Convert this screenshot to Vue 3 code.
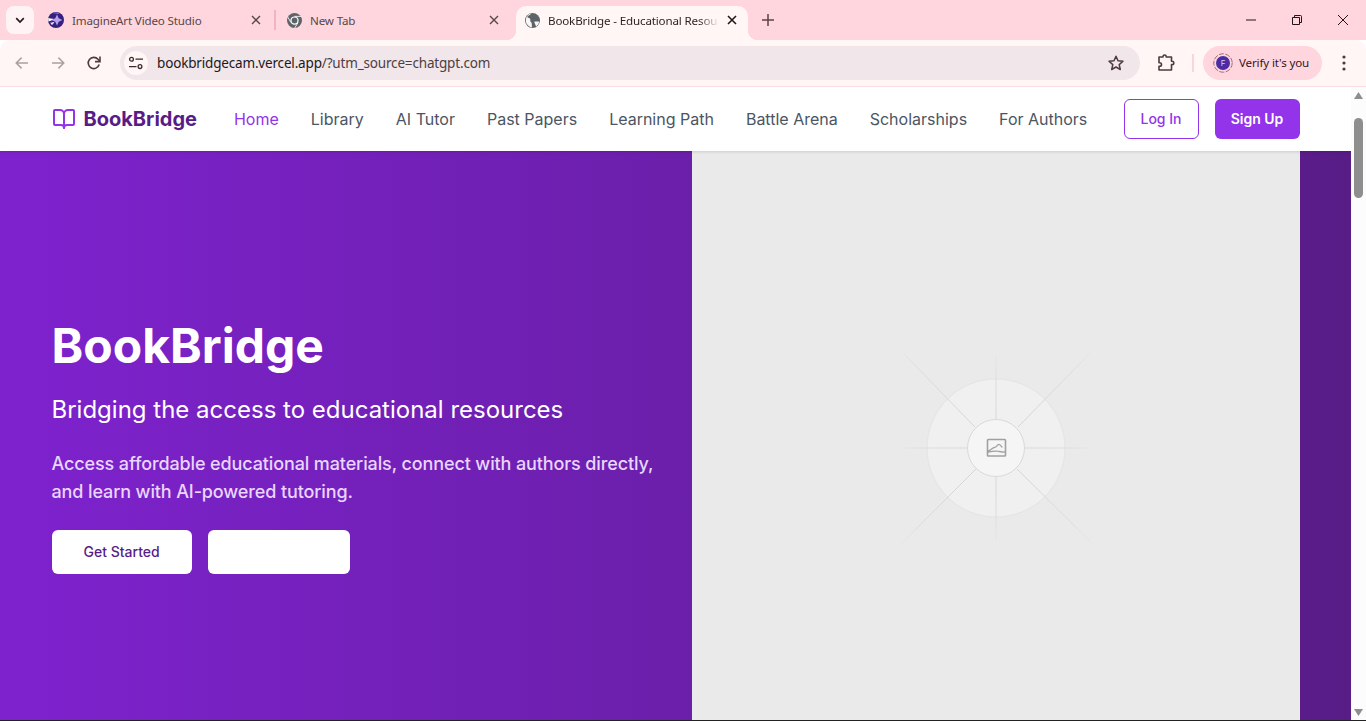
<script setup>
const links = ['Home', 'Library', 'AI Tutor', 'Past Papers', 'Learning Path', 'Battle Arena', 'Scholarships', 'For Authors']
const axisRays = [
  [996, 355, 996, 419], [996, 477, 996, 541],
  [903, 448, 967, 448], [1025, 448, 1089, 448]
]
const diagRays = [
  [903, 353, 975, 427], [1090, 353, 1018, 427],
  [902, 543, 976, 469], [1092, 543, 1017, 469]
]
</script>

<template>
  <div class="window">
    <div class="tabstrip">
      <button class="tabsearch" aria-label="Search tabs">
        <svg width="12" height="12" viewBox="0 0 12 12"><path d="M2.200 4.200 6 8l3.800-3.800" fill="none" stroke="#2a1a1e" stroke-width="1.700"/></svg>
      </button>
      <div class="tab tab-one">
        <svg class="fav" width="16" height="16" viewBox="0 0 16 16">
          <circle cx="8" cy="8" r="8" fill="#35207c"/>
          <path d="M9 2.400 10.700 6.300 14.400 8 10.700 9.700 9 13.600 7.300 9.700 3.600 8 7.300 6.300z" fill="#b7a0f0"/>
          <path d="M.2 6C2 6.600 3.600 7 5.600 6.800 4.400 8.400 2.600 9 .4 9.400z" fill="#fff"/>
          <path d="M2.200 10.600C3.600 10.800 5 10.400 6.400 9.800 5.800 11.400 5 12.400 3.800 13z" fill="#e9e2ff"/>
          <path d="M5 1C7 .3 9.800.5 11.800 2 9.400 1.800 7 2 5 1z" fill="#7d62d8"/>
        </svg>
        <span class="title">ImagineArt Video Studio</span>
        <svg class="close" width="10" height="10" viewBox="0 0 10 10"><path d="M1 1l8 8M9 1l-8 8" stroke="#55474b" stroke-width="1.400"/></svg>
      </div>
      <i class="tabsep"></i>
      <div class="tab tab-two">
        <svg class="fav" width="15" height="15" viewBox="0 0 16 16">
          <circle cx="8" cy="8" r="8" fill="#5f6368"/>
          <circle cx="8" cy="8" r="4.400" fill="#fff"/>
          <circle cx="8" cy="8" r="3.100" fill="#5f6368"/>
          <path d="M8 3.600h7M4.200 10.200.9 4.400M11.800 10.200 8.200 16" stroke="#fff" stroke-width=".9"/>
        </svg>
        <span class="title">New Tab</span>
        <svg class="close" width="10" height="10" viewBox="0 0 10 10"><path d="M1 1l8 8M9 1l-8 8" stroke="#55474b" stroke-width="1.400"/></svg>
      </div>
      <div class="tab active">
        <svg class="fav" width="15" height="15" viewBox="0 0 16 16">
          <circle cx="8" cy="8" r="8" fill="#5f6368"/>
          <path d="M7 .6C5.600 2 4.400 2.400 3 3.200 2 4 2.800 5 4 5.200 5.600 5.400 6 6.600 5.600 8 5.400 9 6.600 9.600 7 10.600 7.400 11.800 7.200 13 7.400 15.400 5 15 2.800 13.400 1.400 11 .4 8 .8 4.600 3 2.400 4.200 1.200 5.600.7 7 .6z" fill="#fff" opacity=".95"/>
          <path d="M9.800 9.400c1.400-.4 3.400-.4 5.400 0-.4 2-1.400 3.600-3.400 5-.4-1.400-1.400-3-2-5z" fill="#fff" opacity=".95"/>
        </svg>
        <span class="title fade">BookBridge - Educational Resou</span>
        <svg class="close" width="10" height="10" viewBox="0 0 10 10"><path d="M1 1l8 8M9 1l-8 8" stroke="#22181b" stroke-width="1.600"/></svg>
      </div>
      <button class="newtab" aria-label="New tab">
        <svg width="12" height="12" viewBox="0 0 12 12"><path d="M6 0v12M0 6h12" stroke="#5b4349" stroke-width="1.500"/></svg>
      </button>
      <div class="winctl">
        <svg width="46" height="16" viewBox="0 0 46 16"><path d="M18 8h10" stroke="#1f1719" stroke-width="1"/></svg>
        <svg width="46" height="16" viewBox="0 0 46 16"><path d="M18.500 5.500h7v7h-7zM20.500 5.500V3.500h6a1 1 0 0 1 1 1v6h-2" fill="none" stroke="#1f1719" stroke-width="1"/></svg>
        <svg width="46" height="16" viewBox="0 0 46 16"><path d="M18 3l10 10M28 3 18 13" stroke="#1f1719" stroke-width="1"/></svg>
      </div>
    </div>

    <div class="toolbar">
      <svg class="tb" width="16" height="16" viewBox="0 0 16 16"><path d="M14 8H2.500M7.600 2.600 2.200 8l5.400 5.400" fill="none" stroke="#ad9fa3" stroke-width="1.500"/></svg>
      <svg class="tb" width="16" height="16" viewBox="0 0 16 16"><path d="M2 8h11.500M8.400 2.600 13.800 8l-5.400 5.400" fill="none" stroke="#ad9fa3" stroke-width="1.500"/></svg>
      <svg class="tb reload" width="16" height="16" viewBox="0 0 16 16"><path d="M13.200 9.600A5.600 5.600 0 1 1 12 4.200L13.600 6" fill="none" stroke="#4f3a40" stroke-width="1.600"/><path d="M14 1.600v5h-5" fill="none" stroke="#4f3a40" stroke-width="1.600"/></svg>
      <div class="omnibox">
        <span class="siteinfo">
          <svg width="16" height="14" viewBox="0 0 16 14"><circle cx="3.500" cy="3.200" r="1.900" fill="none" stroke="#3c2b30" stroke-width="1.300"/><path d="M7.500 3.200H15M1 10.600h7.500" stroke="#3c2b30" stroke-width="1.300"/><circle cx="12" cy="10.600" r="1.900" fill="none" stroke="#3c2b30" stroke-width="1.300"/></svg>
        </span>
        <span class="url"><span>bookbridgecam.vercel.app</span><span class="dim">/?utm_source=chatgpt.com</span></span>
        <svg class="star" width="18" height="18" viewBox="0 0 18 18"><path d="m9 2.200 2 4.600 5 .5-3.800 3.300 1.100 4.900L9 13l-4.300 2.500 1.100-4.900L2 7.300l5-.5z" fill="none" stroke="#4f3a40" stroke-width="1.500" stroke-linejoin="round"/></svg>
      </div>
      <svg class="ext" width="18" height="18" viewBox="0 0 18 18"><path d="M2 3h4V2.600a1.600 1.600 0 0 1 3.200 0V3h5.300v4.200h.6a1.700 1.700 0 0 1 0 3.400h-.6V16H2v-3.700h.7a1.700 1.700 0 0 0 0-3.600H2z" fill="none" stroke="#4f3a40" stroke-width="1.600" stroke-linejoin="round"/></svg>
      <i class="tbsep"></i>
      <div class="profile">
        <svg width="20" height="20" viewBox="0 0 20 20"><circle cx="10" cy="10" r="9.200" fill="none" stroke="#a06c78" stroke-width="1" stroke-dasharray="5 1.500"/><circle cx="10" cy="10" r="7" fill="#4a2ca5"/><text x="10" y="13" text-anchor="middle" class="avatar-letter">F</text></svg>
        <span>Verify it's you</span>
      </div>
      <svg class="dots" width="4" height="16" viewBox="0 0 4 16"><circle cx="2" cy="2" r="1.600" fill="#4f3a40"/><circle cx="2" cy="8" r="1.600" fill="#4f3a40"/><circle cx="2" cy="14" r="1.600" fill="#4f3a40"/></svg>
    </div>

    <div class="viewport">
      <div class="page">
        <header class="navbar">
          <div class="container nav-inner">
            <div class="logo">
              <svg width="24" height="24" viewBox="0 0 24 24" fill="none" stroke="#9333ea" stroke-width="2" stroke-linecap="round" stroke-linejoin="round"><path d="M12 7v14"/><path d="M3 18a1 1 0 0 1-1-1V4a1 1 0 0 1 1-1h5a4 4 0 0 1 4 4 4 4 0 0 1 4-4h5a1 1 0 0 1 1 1v13a1 1 0 0 1-1 1h-6a3 3 0 0 0-3 3 3 3 0 0 0-3-3z"/></svg>
              <span>BookBridge</span>
            </div>
            <nav class="links">
              <a v-for="(l, i) in links" :key="l" :class="{ on: i === 0 }">{{ l }}</a>
            </nav>
            <div class="auth">
              <button class="login">Log In</button>
              <button class="signup">Sign Up</button>
            </div>
          </div>
        </header>

        <section class="hero">
          <div class="container hero-grid">
            <div class="copy">
              <h1>BookBridge</h1>
              <p class="sub">Bridging the access to educational resources</p>
              <p class="lead">Access affordable educational materials, connect with authors directly, and learn with AI-powered tutoring.</p>
              <div class="cta">
                <button class="start">Get Started</button>
                <button class="more">Learn More</button>
              </div>
            </div>
            <div class="visual">
              <svg width="200" height="200" viewBox="896 348 200 200" fill="none">
                <defs>
                  <radialGradient id="rayAxis" gradientUnits="userSpaceOnUse" cx="996" cy="448" r="104">
                    <stop offset=".3" stop-color="#d8d8d8"/>
                    <stop offset=".7" stop-color="#dedede"/>
                    <stop offset="1" stop-color="#eaeaea"/>
                  </radialGradient>
                  <radialGradient id="rayDiag" gradientUnits="userSpaceOnUse" cx="996" cy="448" r="150">
                    <stop offset=".3" stop-color="#d6d6d6"/>
                    <stop offset=".7" stop-color="#dcdcdc"/>
                    <stop offset="1" stop-color="#eaeaea"/>
                  </radialGradient>
                </defs>
                <circle cx="996" cy="448" r="69" fill="#f0f0f0" stroke="#e4e4e4"/>
                <line v-for="(r, i) in axisRays" :key="'a' + i" :x1="r[0]" :y1="r[1]" :x2="r[2]" :y2="r[3]" stroke="url(#rayAxis)"/>
                <line v-for="(r, i) in diagRays" :key="'d' + i" :x1="r[0]" :y1="r[1]" :x2="r[2]" :y2="r[3]" stroke="url(#rayDiag)"/>
                <circle cx="996" cy="448" r="28.500" fill="#f5f5f5" stroke="#d9d9d9"/>
                <rect x="987.500" y="439.500" width="18" height="16.500" rx=".8" stroke="#a0a0a0" stroke-width="1.600"/>
                <path d="M987.500 451c3-.2 4.500-3.500 7.300-3.600 1.700 0 2.400-2.900 4.200-3 1.500 0 2.600 2.400 3.300 3.100M987.500 452c4 0 6.500-1.500 9.500-.8 2.500.5 5.500 1 8.500.8" stroke="#a0a0a0" stroke-width="1.300"/>
              </svg>
            </div>
          </div>
        </section>
      </div>

      <div class="scrollbar">
        <svg width="15" height="16" viewBox="0 0 15 16"><path d="M7.500 5 12 12H3z" fill="#8e8e8e"/></svg>
        <div class="track"><div class="thumb"></div></div>
        <svg width="15" height="16" viewBox="0 0 15 16"><path d="M7.500 12 12 5H3z" fill="#8e8e8e"/></svg>
      </div>
    </div>
  </div>
</template>

<style>
html, body { margin: 0; overflow: hidden; }
</style>

<style scoped>
* { box-sizing: border-box; }
button { border: 0; padding: 0; cursor: pointer; }
.window { height: 721px; display: flex; flex-direction: column; overflow: hidden; border-bottom: 1px solid #222; background: #fff; font-family: Inter, "Liberation Sans", sans-serif; }

.tabstrip { height: 40px; flex: none; background: #ffd6dd; display: flex; align-items: flex-end; padding-left: 6px; font-family: "Noto Sans", "Liberation Sans", sans-serif; position: relative; }
.tabsearch { width: 28px; height: 28px; margin-bottom: 6px; border-radius: 8px; background: #fff4f5; display: flex; align-items: center; justify-content: center; }
.tab { height: 34px; display: flex; align-items: center; padding-bottom: 6px; font-size: 11.600px; letter-spacing: -.15px; color: #55474b; }
.tab-one { width: 236px; margin-left: 4px; padding-left: 10px; padding-right: 13px; }
.tab-two { width: 238px; padding-left: 11px; padding-right: 15px; }
.tabsep { width: 2px; height: 20px; margin-bottom: 10px; background: #f5b3c0; }
.fav { flex: none; margin-right: 8px; }
.title { flex: 1; white-space: nowrap; overflow: hidden; }
.close { flex: none; margin-left: 8px; }
.active { width: 232px; margin-left: 2px; padding-left: 9px; padding-right: 11px; background: #fff6f5; border-radius: 10px 10px 0 0; color: #2a1f22; position: relative; }
.active::before, .active::after { content: ""; position: absolute; bottom: 0; width: 10px; height: 10px; }
.active::before { left: -10px; background: radial-gradient(circle at 0 0, transparent 10px, #fff6f5 10.500px); }
.active::after { right: -10px; background: radial-gradient(circle at 100% 0, transparent 10px, #fff6f5 10.500px); }
.fade { -webkit-mask-image: linear-gradient(to right, #000 88%, transparent 100%); mask-image: linear-gradient(to right, #000 88%, transparent 100%); }
.newtab { width: 28px; height: 28px; margin: 0 0 6px 6px; background: none; display: flex; align-items: center; justify-content: center; }
.winctl { margin-left: auto; height: 40px; display: flex; align-items: center; }

.toolbar { height: 47px; flex: none; background: #fff6f5; border-bottom: 1px solid #f9dfe2; border-radius: 10px 10px 0 0; display: flex; align-items: center; padding: 0 0 1px 14px; font-family: "Noto Sans", "Liberation Sans", sans-serif; position: relative; }
.tb { flex: none; margin-right: 20px; }
.tb.reload { margin-right: 18px; }
.omnibox { width: 1020px; height: 34px; border-radius: 17px; background: #f1e6ea; display: flex; align-items: center; padding: 0 15px 0 4px; flex: none; }
.siteinfo { width: 24px; height: 24px; border-radius: 50%; background: #fff6f5; display: flex; align-items: center; justify-content: center; flex: none; }
.url { margin-left: 9px; flex: 1; font-size: 13.500px; letter-spacing: -.17px; color: #22181b; white-space: nowrap; }
.dim { color: #4d3f43; }
.ext { flex: none; margin-left: 17px; }
.tbsep { width: 2px; height: 18px; background: #fad5dc; margin-left: 17px; flex: none; }
.profile { width: 119px; height: 34px; margin-left: 9px; border-radius: 17px; background: #ffd6dd; display: flex; align-items: center; padding-left: 10px; font-size: 11.600px; letter-spacing: -.15px; color: #33171f; gap: 6px; flex: none; }
.avatar-letter { font-size: 8px; fill: #d9d0f5; font-family: Inter, sans-serif; }
.dots { margin-left: 20px; flex: none; }

.viewport { flex: 1; min-height: 0; display: flex; }
.page { flex: 1; min-width: 0; overflow: hidden; }
.scrollbar { width: 15px; flex: none; background: #fcfcfc; display: flex; flex-direction: column; }
.track { flex: 1; padding: 15px 3px 0; }
.thumb { height: 80px; border-radius: 5px; background: #8e8e8e; }

.container { width: 1280px; margin: 0 auto; padding: 0 16px; }
.navbar { height: 64px; background: #fff; box-shadow: 0 1px 3px rgba(0,0,0,.12); position: relative; z-index: 1; }
.nav-inner { height: 64px; display: flex; align-items: center; }
.logo { display: flex; align-items: center; gap: 8px; font-size: 20px; font-weight: 700; color: #581c87; }
.links { display: flex; gap: 32px; margin-left: 37px; font-size: 16px; font-weight: 400; color: #4b5563; }
.on { color: #9333ea; }
.auth { margin-left: auto; display: flex; gap: 16px; }
.auth button { height: 40px; border-radius: 6px; font-family: inherit; font-size: 14px; padding-bottom: 1px; }
.login { width: 75px; background: #fff; border: 1px solid #9333ea; color: #9333ea; font-weight: 500; }
.signup { width: 85px; background: #9333ea; color: #fff; font-weight: 600; }

.hero { height: 594px; background: linear-gradient(to right, #7e22ce, #581c87); }
.hero-grid { height: 594px; display: grid; grid-template-columns: 1fr 1fr; gap: 32px; }
.copy { display: flex; flex-direction: column; justify-content: center; gap: 24px; color: #fff; }
h1 { margin: 0; font-size: 48px; line-height: 48px; font-weight: 700; }
.sub { margin: 0; font-size: 24px; line-height: 32px; }
.lead { margin: 0; font-size: 18px; line-height: 28px; font-weight: 450; letter-spacing: -.12px; color: #e9d5ff; }
.cta { display: flex; gap: 16px; }
.cta button { height: 44px; padding: 0 32px 1px; border-radius: 6px; background: #fff; font-family: inherit; font-size: 14px; font-weight: 500; }
.start { color: #581c87; }
.cta .more { color: #fff; width: 142px; padding: 0; }
.visual { background: #eaeaea; display: flex; align-items: center; justify-content: center; }
</style>
